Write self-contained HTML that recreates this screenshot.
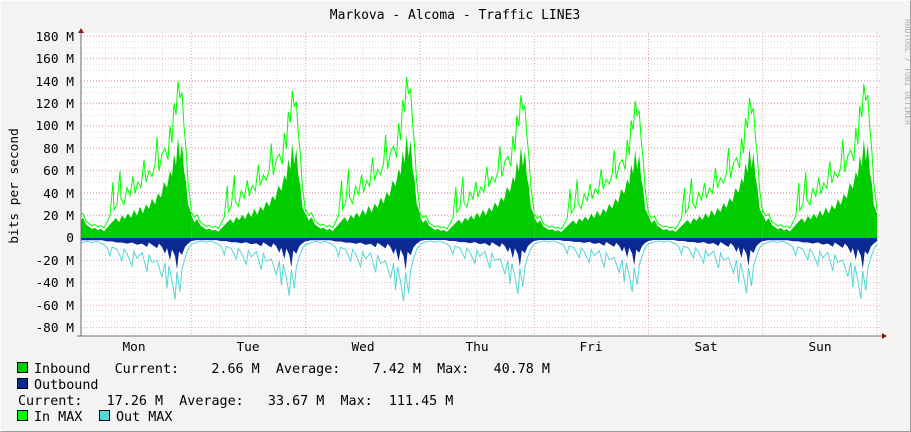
<!DOCTYPE html>
<html><head><meta charset="utf-8"><style>
html,body{margin:0;padding:0;background:#f3f3f3;}
svg{display:block;font-family:"DejaVu Sans Mono","Liberation Mono",monospace;}
.pre{white-space:pre;}
</style></head><body>
<svg width="911" height="432" viewBox="0 0 911 432" xmlns="http://www.w3.org/2000/svg">
<rect x="0" y="0" width="911" height="432" fill="#f3f3f3"/>
<path d="M0.5 431.5V0.5H910.5" stroke="#fcfcfc" fill="none"/>
<path d="M0.5 431.5H910.5V0.5" stroke="#9e9e9e" fill="none"/>
<rect x="81" y="33" width="799" height="303" fill="#ffffff"/>
<defs>
<clipPath id="pc"><rect x="81" y="33" width="798" height="303"/></clipPath>
<g id="day">
<polygon fill="#00cc00" points="0,0 0,22 3,15 6,18 9,12 12,10 15,8 18,9 21,7 24,8 27,6 30,9 33,12 36,15 39,18 42,14 45,20 48,17 51,22 54,18 57,25 60,20 63,28 66,22 69,30 72,26 75,35 78,30 81,40 84,36 87,50 90,45 93,60 95,55 97,75 99,65 101,90 103,70 105,85 107,60 109,50 111,30 114.3,22 114.3,0"/>
<polygon fill="#0a2a92" points="0,0 0,-3 5,-2 10,-2 15,-2 20,-2 25,-2 30,-3 35,-3 40,-4 45,-4 50,-5 55,-4 60,-6 65,-5 70,-8 72,-4 75,-6 80,-9 82,-5 85,-8 88,-14 90,-9 93,-20 95,-10 98,-16 100,-28 102,-12 105,-15 108,-8 111,-5 114.3,-3 114.3,0"/>
<polyline fill="none" stroke="#00ff00" stroke-width="1" vector-effect="non-scaling-stroke" points="0,25 3,20 6,22 9,15 12,13 15,11 18,12 21,10 24,11 27,9 30,14 33,20 36,50 37,25 40,30 43,60 44,35 47,30 50,45 53,38 56,55 58,40 61,50 64,45 67,70 69,50 72,60 75,55 78,65 80,90 82,60 85,75 88,80 91,70 93,100 95,85 97,120 99,110 101,140 103,125 105,130 107,100 109,80 111,50 114.3,25"/>
<polyline fill="none" stroke="#55d6d6" stroke-width="1" vector-effect="non-scaling-stroke" points="0,-6 5,-4 10,-3 15,-4 20,-3 25,-5 30,-8 33,-16 35,-8 40,-10 45,-20 47,-10 50,-14 55,-25 57,-12 60,-18 65,-13 70,-30 72,-15 75,-22 80,-20 85,-35 88,-22 90,-45 92,-25 95,-38 98,-55 100,-30 103,-48 105,-28 108,-18 111,-10 114.3,-6"/>
</g>
</defs>
<g stroke="#dcdcdc" stroke-dasharray="1,2" stroke-width="1">
<path d="M81 59.2H880M81 64.8H880M81 70.4H880M81 81.6H880M81 87.2H880M81 92.8H880M81 104H880M81 109.6H880M81 115.2H880M81 126.4H880M81 132H880M81 137.6H880M81 148.8H880M81 154.4H880M81 160H880M81 171.2H880M81 176.8H880M81 182.4H880M81 193.6H880M81 199.2H880M81 204.8H880M81 216H880M81 221.6H880M81 227.2H880M81 243.6H880M81 249.2H880M81 254.8H880M81 266H880M81 271.6H880M81 277.2H880M81 288.4H880M81 294H880M81 299.6H880M81 310.8H880M81 316.4H880M81 322H880M81 333.2H880M81 42H880M81 47.6H880M81 53.2H880M81 36.4H880"/>
<path d="M105.6 33V336M134 33V336M162.4 33V336M219.9 33V336M248.4 33V336M276.9 33V336M334.2 33V336M362.7 33V336M391.2 33V336M448.5 33V336M477 33V336M505.5 33V336M562.8 33V336M591.3 33V336M619.8 33V336M677.1 33V336M705.6 33V336M734.1 33V336M791.4 33V336M819.9 33V336M848.4 33V336"/>
</g>
<g stroke="#e8a0a0" stroke-dasharray="1,2" stroke-width="1">
<path d="M81 36H880M81 58.4H880M81 80.8H880M81 103.2H880M81 125.6H880M81 148H880M81 170.4H880M81 192.8H880M81 215.2H880M81 260.4H880M81 282.8H880M81 305.2H880M81 327.6H880"/>
<path d="M191.3 33V336M305.6 33V336M419.9 33V336M534.2 33V336M648.5 33V336M762.8 33V336M877.1 33V336"/>
</g>
<g clip-path="url(#pc)">
<use href="#day" transform="translate(77,238) scale(1,-1.12)"/>
<use href="#day" transform="translate(191.3,238) scale(1,-1.05)"/>
<use href="#day" transform="translate(305.6,238) scale(1,-1.15)"/>
<use href="#day" transform="translate(419.9,238) scale(1,-1.02)"/>
<use href="#day" transform="translate(534.2,238) scale(1,-0.98)"/>
<use href="#day" transform="translate(648.5,238) scale(1,-1.0)"/>
<use href="#day" transform="translate(762.8,238) scale(1,-1.1)"/>
</g>
<path d="M81 30V336M77 336H884" stroke="#6e6e6e" stroke-width="1"/>
<path d="M78 33L81 28L84 33Z" fill="#8b1a1a"/>
<path d="M882 333L887 336L882 339Z" fill="#8b1a1a"/>
<g font-size="12.8" fill="#000" text-anchor="end">
<text x="74" y="41">180 M</text><text x="74" y="63">160 M</text><text x="74" y="86">140 M</text>
<text x="74" y="108">120 M</text><text x="74" y="130">100 M</text><text x="74" y="153">80 M</text>
<text x="74" y="175">60 M</text><text x="74" y="198">40 M</text><text x="74" y="220">20 M</text>
<text x="74" y="242">0</text><text x="74" y="265">-20 M</text><text x="74" y="287">-40 M</text>
<text x="74" y="310">-60 M</text><text x="74" y="332">-80 M</text>
</g>
<g font-size="12.8" fill="#000" text-anchor="middle">
<text x="134" y="351">Mon</text><text x="248" y="351">Tue</text><text x="363" y="351">Wed</text>
<text x="477" y="351">Thu</text><text x="591" y="351">Fri</text><text x="706" y="351">Sat</text><text x="820" y="351">Sun</text>
</g>
<text x="455" y="19" font-size="13" text-anchor="middle" fill="#000">Markova - Alcoma - Traffic LINE3</text>
<text transform="translate(18,186) rotate(-90)" font-size="12.8" text-anchor="middle" fill="#000">bits per second</text>
<text transform="translate(905,72) rotate(90)" font-size="8" text-anchor="middle" fill="#aaaaaa">RRDTOOL / TOBI OETIKER</text>
<g stroke="#000" stroke-width="1">
<rect x="17.5" y="362.5" width="10" height="10" fill="#00cc00"/>
<rect x="17.5" y="378.5" width="10" height="10" fill="#0a2a92"/>
<rect x="17.5" y="410.5" width="10" height="10" fill="#00ff00"/>
<rect x="99.5" y="410.5" width="10" height="10" fill="#55d6d6"/>
</g>
<g font-size="13.4" fill="#000">
<text class="pre" x="34" y="373">Inbound   Current:    2.66 M  Average:    7.42 M  Max:   40.78 M</text>
<text class="pre" x="34" y="389">Outbound</text>
<text class="pre" x="18" y="405">Current:   17.26 M  Average:   33.67 M  Max:  111.45 M</text>
<text class="pre" x="34" y="421">In MAX</text>
<text class="pre" x="116" y="421">Out MAX</text>
</g>
</svg>
</body></html>
